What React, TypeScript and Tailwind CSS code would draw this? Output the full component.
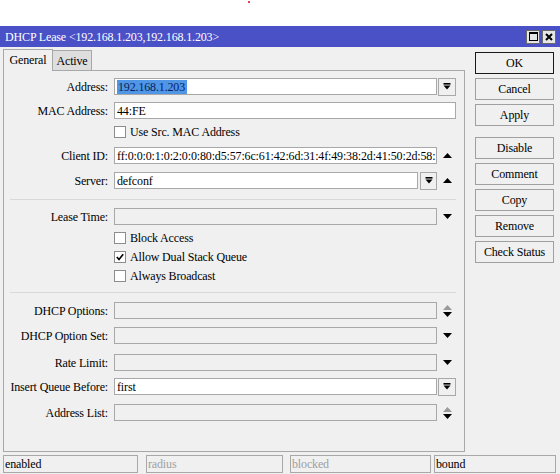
import React from "react";

const Tri = ({ dir, color = "#000" }: { dir: "up" | "down"; color?: string }) => (
  <svg width="9" height="5" viewBox="0 0 9 5" className="block">
    <path d={dir === "up" ? "M0 5 L4.5 0 L9 5Z" : "M0 0 L9 0 L4.5 5Z"} fill={color} />
  </svg>
);

const DropIcon = () => (
  <svg width="8" height="7" viewBox="0 0 8 7" className="block">
    <rect x="0.5" y="0" width="7" height="1.6" fill="#000" />
    <path d="M0.5 2.6 L7.5 2.6 L4 6.6Z" fill="#000" />
  </svg>
);

const DropBtn = ({ w = "w-[18px]", ml = "ml-[1px]" }: { w?: string; ml?: string }) => (
  <div className={`${w} ${ml} h-[18px] border border-[#a8a8a8] bg-[#f0f0f0] flex items-center justify-center`}>
    <DropIcon />
  </div>
);

const Input = ({
  w = "w-[323px]",
  white = false,
  children,
}: {
  w?: string;
  white?: boolean;
  children?: React.ReactNode;
}) => (
  <div
    className={`${w} h-[17px] border border-[#a8a8a8] ${
      white ? "bg-white" : "bg-[#f0f0f0]"
    } pl-[2px] flex items-center overflow-hidden whitespace-nowrap leading-none`}
  >
    {children}
  </div>
);

const Row = ({
  label,
  mt,
  children,
}: {
  label: string;
  mt: string;
  children: React.ReactNode;
}) => (
  <div className={`flex items-center h-[17px] ${mt}`}>
    <div className="w-[104px] text-right whitespace-nowrap leading-none">{label}</div>
    <div className="ml-[6px] flex items-center">{children}</div>
  </div>
);

const Check = ({ label, checked, mt }: { label: string; checked?: boolean; mt: string }) => (
  <div className={`flex items-center h-[14px] ${mt}`}>
    <div className="ml-[110px] w-[12px] h-[12px] border border-[#8c8c8c] bg-white flex items-center justify-center">
      {checked && (
        <svg width="8" height="8" viewBox="0 0 8 8" className="block">
          <path d="M0.8 4 L3 6.4 L7.2 1.2" stroke="#000" strokeWidth="1.6" fill="none" />
        </svg>
      )}
    </div>
    <div className="ml-[4px] leading-none whitespace-nowrap">{label}</div>
  </div>
);

const UpDown = () => (
  <div className="ml-[6px] flex flex-col gap-[2px]">
    <Tri dir="up" color="#9a9a9a" />
    <Tri dir="down" />
  </div>
);

const SideBtn = ({ label, mt, dark }: { label: string; mt: string; dark?: boolean }) => (
  <div
    className={`w-[79px] h-[22px] ${mt} border ${
      dark ? "border-[#1a1a1a]" : "border-[#a0a0a0]"
    } bg-[#f0f0f0] flex items-center justify-center leading-none`}
  >
    {label}
  </div>
);

export default function App() {
  return (
    <div className="w-[560px] h-[474px] bg-white font-['Liberation_Serif',serif] text-[12px] tracking-[-0.15px] text-black overflow-hidden flex flex-col">
      {/* top strip */}
      <div className="h-[26px] bg-white flex">
        <div className="ml-[248px] mt-[1px] w-[2px] h-[2px] bg-[#e04848]" />
      </div>
      {/* title bar */}
      <div className="h-[21px] bg-[#4a50c6] flex items-center text-white">
        <div className="ml-[5px] leading-none whitespace-nowrap">
          DHCP Lease &lt;192.168.1.203,192.168.1.203&gt;
        </div>
        <div className="ml-auto mr-[4px] flex gap-[2px]">
          <div className="w-[14px] h-[14px] bg-[#e6e6e6] border border-[#6a6a6a] flex items-center justify-center">
            <div className="w-[9px] h-[9px] border border-black border-t-2" />
          </div>
          <div className="w-[14px] h-[14px] bg-[#e6e6e6] border border-[#6a6a6a] flex items-center justify-center">
            <svg width="8" height="8" viewBox="0 0 8 8" className="block">
              <path d="M1 1 L7 7 M7 1 L1 7" stroke="#000" strokeWidth="2" />
            </svg>
          </div>
        </div>
      </div>
      {/* window body */}
      <div className="bg-[#f0f0f0] flex-1 flex flex-col">
        <div className="flex h-[408px]">
          {/* left */}
          <div className="ml-[3px] w-[462px] flex flex-col">
            <div className="h-[23px] flex items-end">
              <div className="relative z-10 w-[50px] h-[22px] -mb-px border border-b-0 border-[#a8a8a8] bg-[#f0f0f0] flex items-center justify-center leading-none pb-[2px]">
                General
              </div>
              <div className="w-[39px] h-[20px] border border-l-0 border-b-0 border-[#a8a8a8] bg-[#dedede] flex items-center justify-center leading-none">
                Active
              </div>
            </div>
            <div className="h-[382px] border border-[#a8a8a8] flex flex-col">
              <Row label="Address:" mt="mt-[7px]">
                <Input white>
                  <span className="bg-[#4f96e6] text-[#0b1d5c] pl-[1px] pr-[2px] leading-[14px]">192.168.1.203</span>
                </Input>
                <DropBtn />
              </Row>
              <Row label="MAC Address:" mt="mt-[7px]">
                <Input w="w-[342px]" white>
                  44:FE
                </Input>
              </Row>
              <Check label="Use Src. MAC Address" mt="mt-[6px]" />
              <Row label="Client ID:" mt="mt-[8px]">
                <Input white>
                  ff:0:0:0:1:0:2:0:0:80:d5:57:6c:61:42:6d:31:4f:49:38:2d:41:50:2d:58:
                </Input>
                <div className="ml-[6px]">
                  <Tri dir="up" />
                </div>
              </Row>
              <Row label="Server:" mt="mt-[8px]">
                <Input w="w-[304px]" white>
                  defconf
                </Input>
                <DropBtn w="w-[17px]" ml="ml-[2px]" />
                <div className="ml-[6px]">
                  <Tri dir="up" />
                </div>
              </Row>
              <div className="mt-[10px] ml-[6px] w-[446px] h-px bg-[#d9d9d9]" />
              <Row label="Lease Time:" mt="mt-[8px]">
                <Input />
                <div className="ml-[6px]">
                  <Tri dir="down" />
                </div>
              </Row>
              <Check label="Block Access" mt="mt-[6px]" />
              <Check label="Allow Dual Stack Queue" checked mt="mt-[5px]" />
              <Check label="Always Broadcast" mt="mt-[5px]" />
              <div className="mt-[9px] ml-[6px] w-[446px] h-px bg-[#d9d9d9]" />
              <Row label="DHCP Options:" mt="mt-[9px]">
                <Input />
                <UpDown />
              </Row>
              <Row label="DHCP Option Set:" mt="mt-[8px]">
                <Input />
                <div className="ml-[6px]">
                  <Tri dir="down" />
                </div>
              </Row>
              <Row label="Rate Limit:" mt="mt-[10px]">
                <Input />
                <div className="ml-[6px]">
                  <Tri dir="down" />
                </div>
              </Row>
              <Row label="Insert Queue Before:" mt="mt-[7px]">
                <Input white>first</Input>
                <DropBtn />
              </Row>
              <Row label="Address List:" mt="mt-[9px]">
                <Input />
                <UpDown />
              </Row>
            </div>
          </div>
          {/* right buttons */}
          <div className="ml-[10px] mt-[5px] flex flex-col">
            <SideBtn label="OK" mt="mt-0" dark />
            <SideBtn label="Cancel" mt="mt-[4px]" />
            <SideBtn label="Apply" mt="mt-[4px]" />
            <SideBtn label="Disable" mt="mt-[11px]" />
            <SideBtn label="Comment" mt="mt-[4px]" />
            <SideBtn label="Copy" mt="mt-[4px]" />
            <SideBtn label="Remove" mt="mt-[4px]" />
            <SideBtn label="Check Status" mt="mt-[4px]" />
          </div>
        </div>
        {/* status bar */}
        <div className="flex h-[18px]">
          <div className="ml-[3px] w-[135px] border border-[#a8a8a8] flex items-center pl-[1px] leading-none">enabled</div>
          <div className="ml-[8px] w-[137px] border border-[#a8a8a8] flex items-center pl-[1px] leading-none text-[#a0a0a0]">radius</div>
          <div className="ml-[7px] w-[141px] border border-[#a8a8a8] flex items-center pl-[1px] leading-none text-[#a0a0a0]">blocked</div>
          <div className="ml-[3px] w-[122px] border border-[#a8a8a8] flex items-center pl-[1px] leading-none">bound</div>
        </div>
      </div>
    </div>
  );
}
